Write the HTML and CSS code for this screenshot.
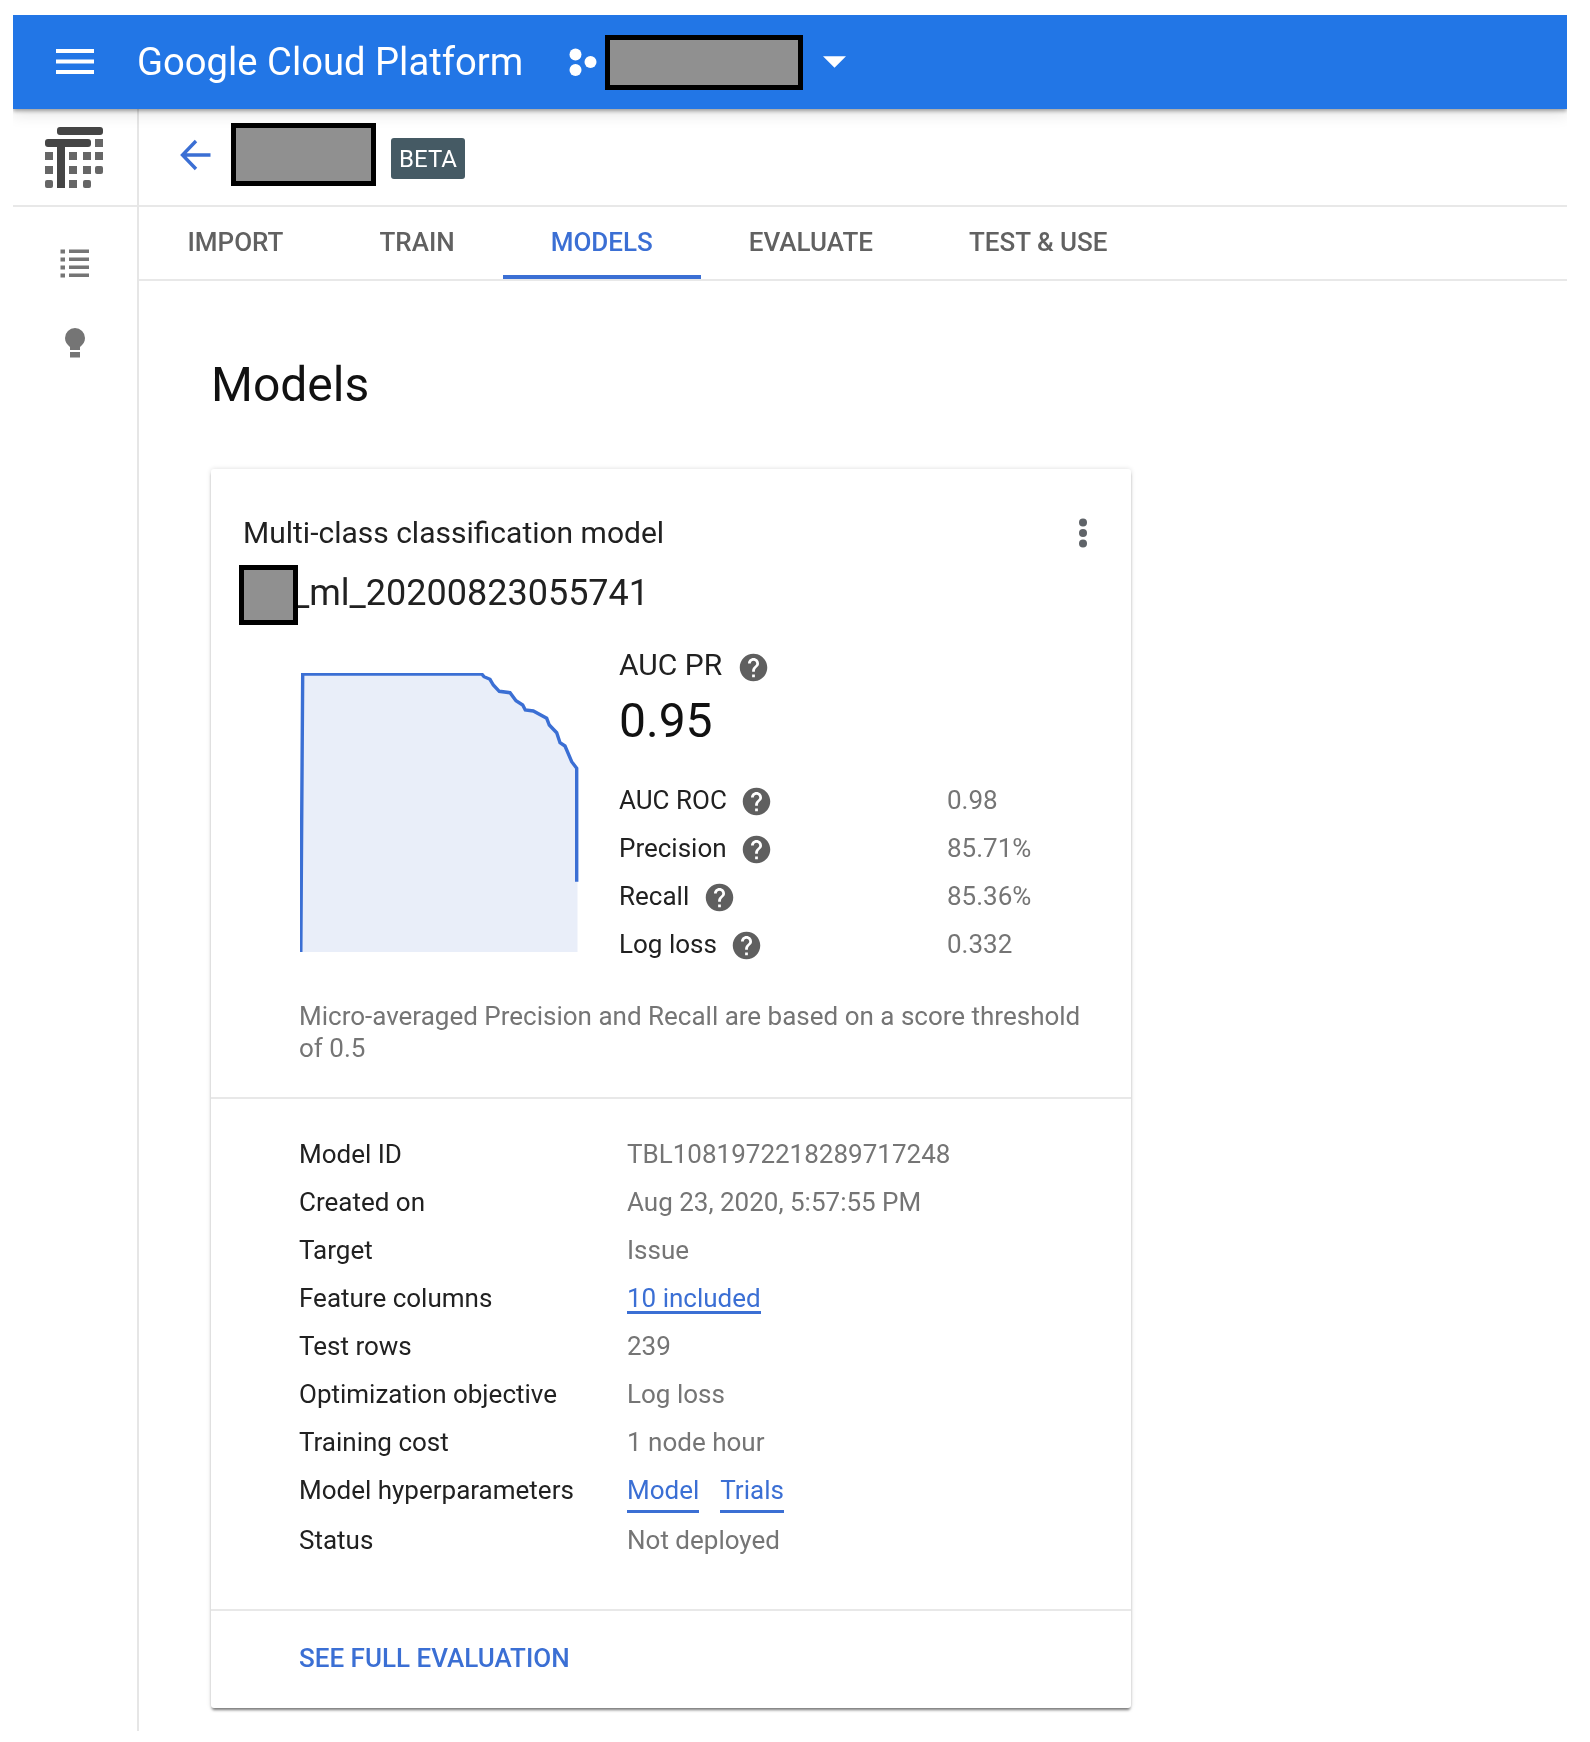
FILE: index.html
```html
<!DOCTYPE html>
<html lang="en">
<head>
<meta charset="utf-8">
<title>Models</title>
<link rel="stylesheet" href="styles.css">
</head>
<body>
<svg class="defs" width="0" height="0" aria-hidden="true">
  <symbol id="help" viewBox="0 0 24 24"><path d="M12 2C6.48 2 2 6.48 2 12s4.48 10 10 10 10-4.48 10-10S17.52 2 12 2zm1 17h-2v-2h2v2zm2.07-7.75l-.9.92C13.45 12.9 13 13.5 13 15h-2v-.5c0-1.1.45-2.1 1.17-2.83l1.24-1.26c.37-.36.59-.86.59-1.41 0-1.1-.9-2-2-2s-2 .9-2 2H8c0-2.21 1.79-4 4-4s4 1.79 4 4c0 .88-.36 1.68-.93 2.25z"/></symbol>
</svg>
<div class="app">
  <header class="topbar">
    <svg class="menu" width="38" height="26" viewBox="0 0 38 26"><rect y="0" width="38" height="4"/><rect y="10.5" width="38" height="4"/><rect y="21" width="38" height="4"/></svg>
    <span class="brand">Google Cloud Platform</span>
    <svg class="project-icon" width="28" height="28" viewBox="0 0 28 28"><circle cx="6.5" cy="6.5" r="6"/><circle cx="6.5" cy="22" r="6"/><circle cx="21.5" cy="14" r="6"/></svg>
    <span class="redact redact-project"></span>
    <svg class="caret" width="23" height="12" viewBox="0 0 24 12"><path d="M0 0h24L12 12z"/></svg>
  </header>
  <div class="shell">
    <aside class="side">
      <div class="side-logo">
        <svg width="58" height="61" viewBox="0 0 58 61">
          <g class="tb-dark"><rect x="12" y="0" width="46" height="8" rx="3"/><rect x="0" y="12" width="46" height="8" rx="3"/><rect x="12" y="12" width="8" height="49"/></g>
          <g class="tb-cell">
            <rect x="50" y="12" width="8" height="8"/><rect x="50" y="25" width="8" height="8"/><rect x="50" y="39" width="8" height="8" rx="2"/>
            <rect x="0" y="25" width="8" height="8"/><rect x="24" y="25" width="8" height="8"/><rect x="38" y="25" width="8" height="8"/>
            <rect x="0" y="39" width="8" height="8"/><rect x="24" y="39" width="8" height="8"/><rect x="38" y="39" width="8" height="8"/>
            <rect x="0" y="53" width="8" height="8" rx="2"/><rect x="24" y="53" width="8" height="8"/><rect x="38" y="53" width="8" height="8" rx="2"/>
          </g>
        </svg>
      </div>
      <nav class="side-nav">
        <svg class="nav-list" width="30" height="29" viewBox="0 0 30 29"><rect x="0.5" y="0.5" width="4.5" height="4"/><rect x="9" y="0.5" width="20" height="3.5"/><rect x="0.5" y="8.5" width="4.5" height="4"/><rect x="9" y="8.5" width="20" height="3.5"/><rect x="0.5" y="16.5" width="4.5" height="4"/><rect x="9" y="16.5" width="20" height="3.5"/><rect x="0.5" y="24.5" width="4.5" height="4"/><rect x="9" y="24.5" width="20" height="3.5"/></svg>
        <svg class="nav-bulb" width="20" height="30" viewBox="0 0 20 30"><path d="M10 0a10 10 0 0 1 10 10c0 4-2 6.500-5 9v3H5v-3c-3-2.500-5-5-5-9A10 10 0 0 1 10 0z"/><rect x="5" y="24" width="10" height="5.500"/></svg>
      </nav>
    </aside>
    <main class="main">
      <div class="titlebar">
        <svg class="back" width="32" height="32" viewBox="0 0 32 32"><path d="M30.500 16H3M16 2 2.500 16 16 30"/></svg>
        <span class="redact redact-dataset"></span>
        <span class="beta">BETA</span>
      </div>
      <div class="tabs">
        <a class="tab">IMPORT</a>
        <a class="tab">TRAIN</a>
        <a class="tab tab-active">MODELS</a>
        <a class="tab">EVALUATE</a>
        <a class="tab">TEST &amp; USE</a>
      </div>
      <div class="content">
        <h1 class="page-title">Models</h1>
        <section class="card">
          <div class="summary">
            <div class="card-head">
              <span class="card-type">Multi-class classification model</span>
              <svg class="kebab" width="10" height="30" viewBox="0 0 10 30"><circle cx="5" cy="4.500" r="4"/><circle cx="5" cy="15" r="4"/><circle cx="5" cy="25.500" r="4"/></svg>
            </div>
            <div class="card-name"><span class="redact redact-name"></span><span class="name-text">_ml_20200823055741</span></div>
            <div class="metrics">
              <svg class="chart" width="280" height="280" viewBox="0 0 280 280">
                <path class="chart-fill" d="M1 279 2.700 1H181.700L184 3.700 190 6.300 193.300 12 199.300 18.300 210 19.700 216 27.700 222.700 32 225.300 37 233.300 38 246.700 45.300 249.300 52 256.700 59.700 260 69.700 265 73 271.700 88.700 277.500 95.300V279z"/>
                <path class="chart-line" d="M0.800 279 2.700 1H181.700L184 3.700 190 6.300 193.300 12 199.300 18.300 210 19.700 216 27.700 222.700 32 225.300 37 233.300 38 246.700 45.300 249.300 52 256.700 59.700 260 69.700 265 73 271.700 88.700 276.700 95.300V208.700"/>
              </svg>
              <div class="scores">
                <div class="auc-label">AUC PR <svg class="help"><use href="#help"/></svg></div>
                <div class="auc-value">0.95</div>
                <div class="score-row"><span class="score-name">AUC ROC <svg class="help"><use href="#help"/></svg></span><span class="muted">0.98</span></div>
                <div class="score-row"><span class="score-name">Precision <svg class="help"><use href="#help"/></svg></span><span class="muted">85.71%</span></div>
                <div class="score-row"><span class="score-name">Recall <svg class="help"><use href="#help"/></svg></span><span class="muted">85.36%</span></div>
                <div class="score-row"><span class="score-name">Log loss <svg class="help"><use href="#help"/></svg></span><span class="muted">0.332</span></div>
              </div>
            </div>
            <p class="note">Micro-averaged Precision and Recall are based on a score threshold of 0.5</p>
          </div>
          <dl class="details">
            <dt>Model ID</dt><dd>TBL1081972218289717248</dd>
            <dt>Created on</dt><dd>Aug 23, 2020, 5:57:55 PM</dd>
            <dt>Target</dt><dd>Issue</dd>
            <dt>Feature columns</dt><dd><a class="link">10 included</a></dd>
            <dt>Test rows</dt><dd>239</dd>
            <dt>Optimization objective</dt><dd>Log loss</dd>
            <dt>Training cost</dt><dd>1 node hour</dd>
            <dt>Model hyperparameters</dt><dd class="links"><a class="link link-tall">Model</a><a class="link link-tall">Trials</a></dd>
            <dt class="last">Status</dt><dd class="last">Not deployed</dd>
          </dl>
          <div class="card-foot"><a class="see-full">SEE FULL EVALUATION</a></div>
        </section>
      </div>
    </main>
  </div>
</div>
</body>
</html>
```

FILE: styles.css
```css
* { box-sizing: border-box; }
html, body { margin: 0; padding: 0; background: #fff; }
body { font-family: Roboto, "Liberation Sans", sans-serif; color: #212121; }
.defs { position: absolute; }
.app { margin: 15px 23px 0 13px; height: 1716px; overflow: hidden; filter: blur(.45px); }

.topbar {
  position: relative; z-index: 2; height: 94px; background: #2276e6; color: #fff;
  display: flex; align-items: center;
  box-shadow: 0 2px 4px rgba(0,0,0,.35), 0 6px 14px rgba(0,0,0,.1);
}
.menu { margin-left: 43px; fill: #fff; flex: none; }
.brand { margin-left: 43px; font-size: 38.2px; width: 432px; flex: none; }
.project-icon { fill: #fff; flex: none; }
.redact { display: block; flex: none; background: #909090; border: 5px solid #000; }
.redact-project { width: 198px; height: 55px; margin-left: 8px; }
.caret { fill: #fff; margin-left: 20px; }

.shell { display: flex; min-height: 1622px; }
.side { width: 126px; flex: none; border-right: 2px solid #e6e6e6; }
.side-logo { height: 98px; border-bottom: 2px solid #e8e8e8; padding: 18px 0 0 32px; }
.side-logo svg { display: block; }
.tb-dark { fill: #454545; }
.tb-cell { fill: #666; }
.side-nav { display: flex; flex-direction: column; padding: 42px 0 0 47px; }
.nav-list { fill: #757575; }
.nav-bulb { fill: #757575; margin: 50px 0 0 5px; }

.main { flex: 1; min-width: 0; }
.titlebar { height: 98px; border-bottom: 2px solid #e8e8e8; display: flex; align-items: flex-start; }
.back { fill: none; stroke: #3b6fd4; stroke-width: 3.4; margin: 30px 0 0 41px; flex: none; }
.redact-dataset { width: 145px; height: 63px; margin: 14px 0 0 19px; }
.beta {
  margin: 29px 0 0 15px; width: 74px; height: 41px; line-height: 43px; text-align: center;
  background: #455a64; color: #fff; font-size: 24px; border-radius: 3px;
}

.tabs { height: 74px; border-bottom: 2px solid #e8e8e8; display: flex; padding-left: .5px; }
.tab {
  height: 72px; padding: 0 48px; line-height: 70px; font-size: 26px; font-weight: 500; color: #616161;
}
.tab-active { color: #3b6fd4; border-bottom: 4px solid #3b6fd4; }

.content { padding: 76px 0 0 72px; }
.page-title { margin: 0 0 56px; font-size: 48px; line-height: 56px; font-weight: 400; color: #111; }

.card {
  width: 920px; height: 1239px; background: #fff; border-radius: 3px;
  box-shadow: 0 0 5px rgba(0,0,0,.14), 0 3px 3px -1px rgba(0,0,0,.5);
}
.summary { padding: 43px 0 0 32px; height: 630px; border-bottom: 2px solid #e8e8e8; }
.card-head { display: flex; justify-content: space-between; align-items: center; height: 40px; padding-right: 43px; }
.card-type { font-size: 30px; color: #212121; }
.kebab { fill: #5f6368; margin-top: 2px; }
.card-name { display: flex; align-items: center; height: 44px; margin: 18px 0 0 -4px; font-size: 36px; color: #212121; }
.redact-name { width: 59px; height: 60px; margin: 6px -5px 0 0; position: relative; z-index: 1; }
.name-text { padding-top: 2px; }
.metrics { display: flex; align-items: flex-start; margin: 31px 0 0 57px; }
.chart { flex: none; margin-top: 28px; display: block; }
.chart-fill { fill: #e9eef9; }
.chart-line { fill: none; stroke: #3b6fd4; stroke-width: 3.4; }
.scores { margin-left: 39px; width: 420px; }
.help { width: 33px; height: 33px; fill: #5f5f5f; vertical-align: -9px; margin-left: 7px; }
.auc-label { height: 40px; line-height: 40px; font-size: 30px; color: #212121; }
.auc-value { height: 60px; line-height: 60px; margin-top: 6px; font-size: 48px; color: #111; }
.score-row { display: flex; height: 48px; line-height: 48px; font-size: 26px; }
.auc-value + .score-row { margin-top: 25px; }
.score-name { width: 328px; color: #212121; }
.muted { color: #757575; }
.note { margin: 32px 0 0 56px; width: 810px; font-size: 26px; line-height: 32px; color: #757575; }

.details {
  margin: 0; padding: 31px 0 0 88px; height: 512px; border-bottom: 2px solid #e8e8e8;
  display: grid; grid-template-columns: 328px 1fr; grid-auto-rows: 48px; line-height: 48px; font-size: 26px;
}
.details dt { color: #212121; }
.details dd { margin: 0; color: #757575; }
.details .last { padding-top: 2px; }
.links { display: flex; gap: 21px; }
.link { display: inline-block; color: #3b6fd4; height: 40px; line-height: 48px; border-bottom: 3px solid #3b6fd4; }
.link-tall { height: 47px; }
.card-foot { height: 95px; padding-left: 88px; line-height: 95px; }
.see-full { font-size: 26px; font-weight: 500; color: #3b6fd4; }
```
